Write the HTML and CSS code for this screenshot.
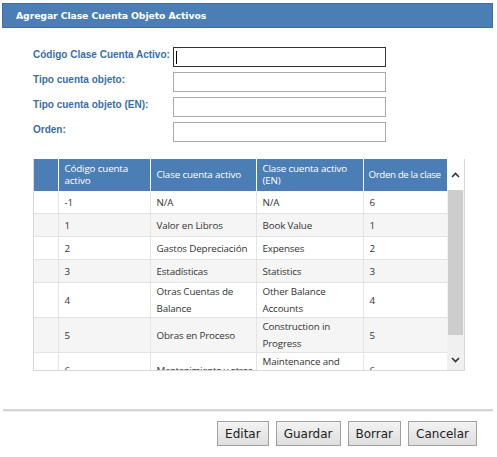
FILE: index.html
```html
<!DOCTYPE html>
<html>
<head>
<meta charset="utf-8">
<link rel="stylesheet" href="styles.css">
</head>
<body>
<div class="header">Agregar Clase Cuenta Objeto Activos</div>
<div class="form">
  <label class="lbl">Código Clase Cuenta Activo:</label><div class="inp focus"><span class="caret"></span></div>
  <label class="lbl">Tipo cuenta objeto:</label><div class="inp"></div>
  <label class="lbl">Tipo cuenta objeto (EN):</label><div class="inp"></div>
  <label class="lbl">Orden:</label><div class="inp"></div>
</div>
<div class="grid-wrap">
  <div class="grid-view">
    <table class="grid">
      <colgroup><col class="c0"><col class="c1"><col class="c2"><col class="c3"><col class="c4"></colgroup>
      <thead>
        <tr><th></th><th>Código cuenta activo</th><th>Clase cuenta activo</th><th>Clase cuenta activo (EN)</th><th class="nw">Orden de la clase</th></tr>
      </thead>
      <tbody>
        <tr><td></td><td>-1</td><td>N/A</td><td>N/A</td><td>6</td></tr>
        <tr class="alt"><td></td><td>1</td><td>Valor en Libros</td><td>Book Value</td><td>1</td></tr>
        <tr><td></td><td>2</td><td>Gastos Depreciación</td><td>Expenses</td><td>2</td></tr>
        <tr class="alt"><td></td><td>3</td><td>Estadísticas</td><td>Statistics</td><td>3</td></tr>
        <tr><td></td><td>4</td><td>Otras Cuentas de Balance</td><td>Other Balance Accounts</td><td>4</td></tr>
        <tr class="alt"><td></td><td>5</td><td>Obras en Proceso</td><td>Construction in Progress</td><td>5</td></tr>
        <tr><td></td><td>6</td><td class="nw">Mantenimiento y otros</td><td>Maintenance and Others</td><td>6</td></tr>
      </tbody>
    </table>
  </div>
  <div class="sbar">
    <div class="sb-btn"><svg width="9" height="6" viewBox="0 0 9 6"><path d="M1 5 L4.5 1.5 L8 5" fill="none" stroke="#333" stroke-width="1.6"/></svg></div>
    <div class="sb-track"><div class="sb-thumb"></div></div>
    <div class="sb-btn"><svg width="9" height="6" viewBox="0 0 9 6"><path d="M1 1 L4.5 4.5 L8 1" fill="none" stroke="#333" stroke-width="1.6"/></svg></div>
  </div>
</div>
<div class="sep"></div>
<div class="actions">
  <button class="btn">Editar</button>
  <button class="btn">Guardar</button>
  <button class="btn">Borrar</button>
  <button class="btn">Cancelar</button>
</div>
</body>
</html>
```

FILE: styles.css
```css
html, body { margin: 0; padding: 0; background: #fff; }
body { width: 497px; height: 457px; overflow: hidden; font-family: "DejaVu Sans", Verdana, sans-serif; }

.header {
  margin: 3px 4px 0 2px;
  height: 25px;
  box-sizing: border-box;
  background: #4a7eb5;
  border: 1px solid #3f6f9f;
  color: #fff;
  font-family: "DejaVu Sans", Verdana, sans-serif;
  font-weight: bold;
  font-size: 9.3px;
  line-height: 23px;
  padding-left: 13px;
  letter-spacing: -0.1px;
}

.form {
  display: grid;
  grid-template-columns: 140px 213px;
  row-gap: 5px;
  margin: 19px 0 0 33px;
  align-items: center;
}
.lbl {
  font-family: "Liberation Sans", Arial, sans-serif;
  font-weight: bold;
  font-size: 10px;
  color: #3a6ea8;
  white-space: nowrap;
  align-self: start;
  padding-top: 2px;
}
.inp {
  height: 20px;
  box-sizing: border-box;
  border: 1px solid #a9a9a9;
  background: #fff;
  position: relative;
}
.inp.focus { border-color: #333; }
.caret { position: absolute; left: 2px; top: 3px; width: 1px; height: 13px; background: #000; }

.grid-wrap {
  display: flex;
  margin: 17px 0 0 33px;
  width: 432px;
  height: 212px;
  box-sizing: border-box;
  border: 1px solid #d8d8d8;
  border-top: none;
  overflow: hidden;
}
.grid-view { width: 414px; overflow: hidden; }
.grid {
  border-collapse: collapse;
  width: 414px;
  table-layout: fixed;
  font-family: "Open Sans", "Noto Sans", sans-serif;
  font-size: 9.8px;
  letter-spacing: -0.15px;
  color: #333;
}
.c0 { width: 24px; } .c1 { width: 92px; } .c2 { width: 106px; } .c3 { width: 107px; } .c4 { width: 85px; }
.grid th {
  background: #4a7eb5;
  color: #fff;
  font-weight: normal;
  text-align: left;
  height: 32px;
  padding: 0 4px 0 6px;
  line-height: 12px;
  border-right: 1px solid #fff;
  box-sizing: border-box;
}
.grid th:last-child { border-right: none; }
.grid .nw { white-space: nowrap; overflow: hidden; letter-spacing: -0.4px; }
.grid th.nw { padding: 0 0 0 5px; }
.grid td {
  padding: 0 4px 0 6px;
  height: 22px;
  line-height: 17px;
  border-bottom: 1px solid #e4e4e4;
  border-right: 1px solid #e4e4e4;
  vertical-align: middle;
}
.grid td:last-child { border-right: none; }
.grid tr.alt td { background: #f5f5f5; }

.sbar { width: 17px; display: flex; flex-direction: column; background: #f0f0f0; }
.sb-btn { height: 31px; display: flex; align-items: center; justify-content: center; background: #fff; }
.sb-btn:last-child { height: 20px; background: #f0f0f0; }
.sb-track { flex: 1; background: #f0f0f0; }
.sb-thumb { height: 145px; background: #cdcdcd; margin: 0 1px; }

.sep {
  margin: 38px 4px 0 3px;
  height: 2px;
  background: #d6d6d6;
  border-bottom: 1px solid #efefef;
}
.actions {
  display: flex;
  justify-content: flex-end;
  gap: 7px;
  margin: 9px 20px 0 0;
}
.btn {
  font-family: "DejaVu Sans", Verdana, sans-serif;
  font-size: 12px;
  color: #222;
  height: 25px;
  padding: 0 7px;
  border: 1px solid #a0a0a0;
  background: linear-gradient(#f3f3f3, #dedede);
  border-radius: 0;
}
```
